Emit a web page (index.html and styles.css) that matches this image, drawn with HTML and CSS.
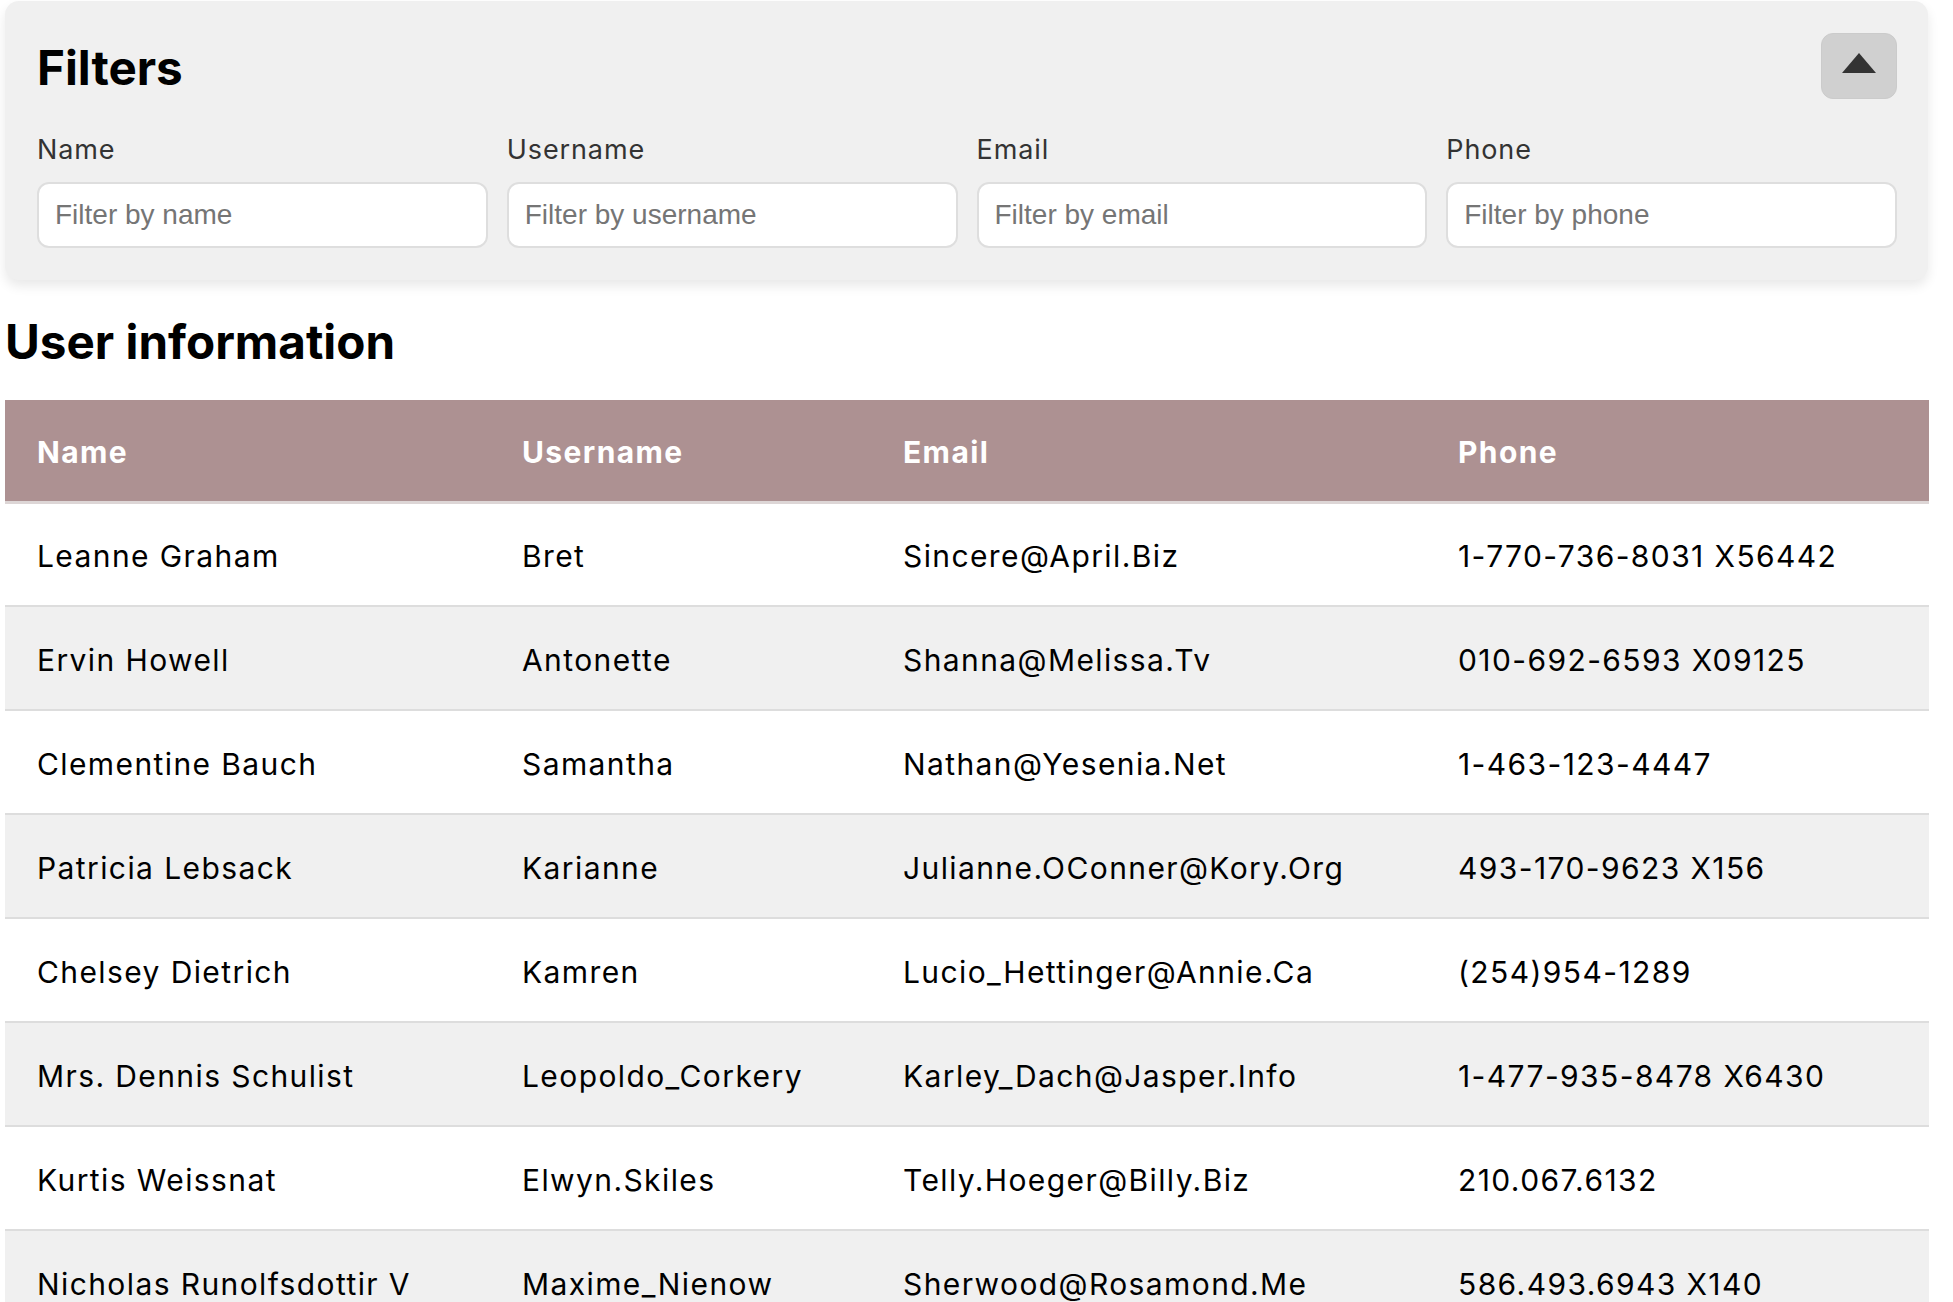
FILE: index.html
```html
<!DOCTYPE html>
<html lang="en">
<head>
<meta charset="utf-8">
<title>User information</title>
<link rel="stylesheet" href="styles.css">
</head>
<body>
<div class="page">
  <section class="filters">
    <div class="filters-head">
      <h2 class="title">Filters</h2>
      <button class="toggle" type="button" aria-label="Collapse filters">
        <svg width="34" height="20" viewBox="0 0 34 20"><polygon points="17,0 34,20 0,20" fill="#333"/></svg>
      </button>
    </div>
    <div class="filter-grid">
      <label class="field"><span class="field-label">Name</span><input class="field-input" type="text" placeholder="Filter by name"></label>
      <label class="field"><span class="field-label">Username</span><input class="field-input" type="text" placeholder="Filter by username"></label>
      <label class="field"><span class="field-label">Email</span><input class="field-input" type="text" placeholder="Filter by email"></label>
      <label class="field"><span class="field-label">Phone</span><input class="field-input" type="text" placeholder="Filter by phone"></label>
    </div>
  </section>

  <h2 class="title section-title">User information</h2>

  <table class="users">
    <colgroup>
      <col class="c1"><col class="c2"><col class="c3"><col class="c4">
    </colgroup>
    <thead>
      <tr><th>Name</th><th>Username</th><th>Email</th><th>Phone</th></tr>
    </thead>
    <tbody>
      <tr><td>Leanne Graham</td><td>Bret</td><td>Sincere@April.Biz</td><td>1-770-736-8031 X56442</td></tr>
      <tr><td>Ervin Howell</td><td>Antonette</td><td>Shanna@Melissa.Tv</td><td>010-692-6593 X09125</td></tr>
      <tr><td>Clementine Bauch</td><td>Samantha</td><td>Nathan@Yesenia.Net</td><td>1-463-123-4447</td></tr>
      <tr><td>Patricia Lebsack</td><td>Karianne</td><td>Julianne.OConner@Kory.Org</td><td>493-170-9623 X156</td></tr>
      <tr><td>Chelsey Dietrich</td><td>Kamren</td><td>Lucio_Hettinger@Annie.Ca</td><td>(254)954-1289</td></tr>
      <tr><td>Mrs. Dennis Schulist</td><td>Leopoldo_Corkery</td><td>Karley_Dach@Jasper.Info</td><td>1-477-935-8478 X6430</td></tr>
      <tr><td>Kurtis Weissnat</td><td>Elwyn.Skiles</td><td>Telly.Hoeger@Billy.Biz</td><td>210.067.6132</td></tr>
      <tr><td>Nicholas Runolfsdottir V</td><td>Maxime_Nienow</td><td>Sherwood@Rosamond.Me</td><td>586.493.6943 X140</td></tr>
    </tbody>
  </table>
</div>
</body>
</html>
```

FILE: styles.css
```css
* { box-sizing: border-box; }

html, body {
  margin: 0;
  padding: 0;
  background: #ffffff;
}

body {
  font-family: Inter, "Noto Sans", sans-serif;
  color: #000;
}

.page {
  width: 1924px;
  margin-left: 5px;
  padding-top: 1px;
}

.filters {
  width: 1923px;
  background: #f0f0f0;
  border-radius: 14px;
  padding: 32px 31px 32px 32px;
  box-shadow: 0 6px 12px rgba(0, 0, 0, 0.09);
}

.filters-head {
  display: flex;
  align-items: center;
  justify-content: space-between;
}

.title {
  margin: 0;
  font-family: Inter, sans-serif;
  font-weight: 700;
  font-size: 47.6px;
  line-height: normal;
  color: #000;
}

.filters-head .title {
  padding-top: 2px;
}

.toggle {
  width: 76px;
  height: 66px;
  display: flex;
  align-items: center;
  justify-content: center;
  padding: 0 0 7px 0;
  background: #d0d0d0;
  border: 1px solid #cbcbcb;
  border-radius: 12px;
}

.filter-grid {
  display: grid;
  grid-template-columns: repeat(4, 1fr);
  column-gap: 19px;
  margin-top: 34px;
}

.field {
  display: flex;
  flex-direction: column;
  gap: 16px;
}

.field-label {
  font-family: Inter, sans-serif;
  font-size: 27px;
  line-height: normal;
  letter-spacing: 0.9px;
  color: #333;
}

.field-input {
  width: 100%;
  height: 66px;
  padding: 0 16px;
  border: 2px solid #dedede;
  border-radius: 12px;
  background: #fff;
  font-family: "Liberation Sans", Arial, sans-serif;
  font-size: 28px;
  color: #000;
  outline: none;
}

.field-input::placeholder {
  color: #757575;
}

.section-title {
  margin: 33px 0 30px 0;
}

.users {
  width: 1924px;
  border-collapse: collapse;
  table-layout: fixed;
  font-family: Inter, sans-serif;
  font-size: 30px;
  letter-spacing: 1.4px;
}

.c1 { width: 485px; }
.c2 { width: 381px; }
.c3 { width: 555px; }
.c4 { width: 503px; }

.users th {
  height: 102px;
  padding: 3px 0 0 32px;
  text-align: left;
  font-weight: 700;
  color: #fff;
  background: #ad9192;
  border-bottom: 3px solid #ddd6d6;
}

.users td {
  height: 104px;
  padding: 3px 0 0 32px;
  white-space: nowrap;
  color: #000;
  border-bottom: 2px solid #dddddd;
}

.users tbody tr:nth-child(odd) { background: #ffffff; }
.users tbody tr:nth-child(even) { background: #f0f0f0; }
```
